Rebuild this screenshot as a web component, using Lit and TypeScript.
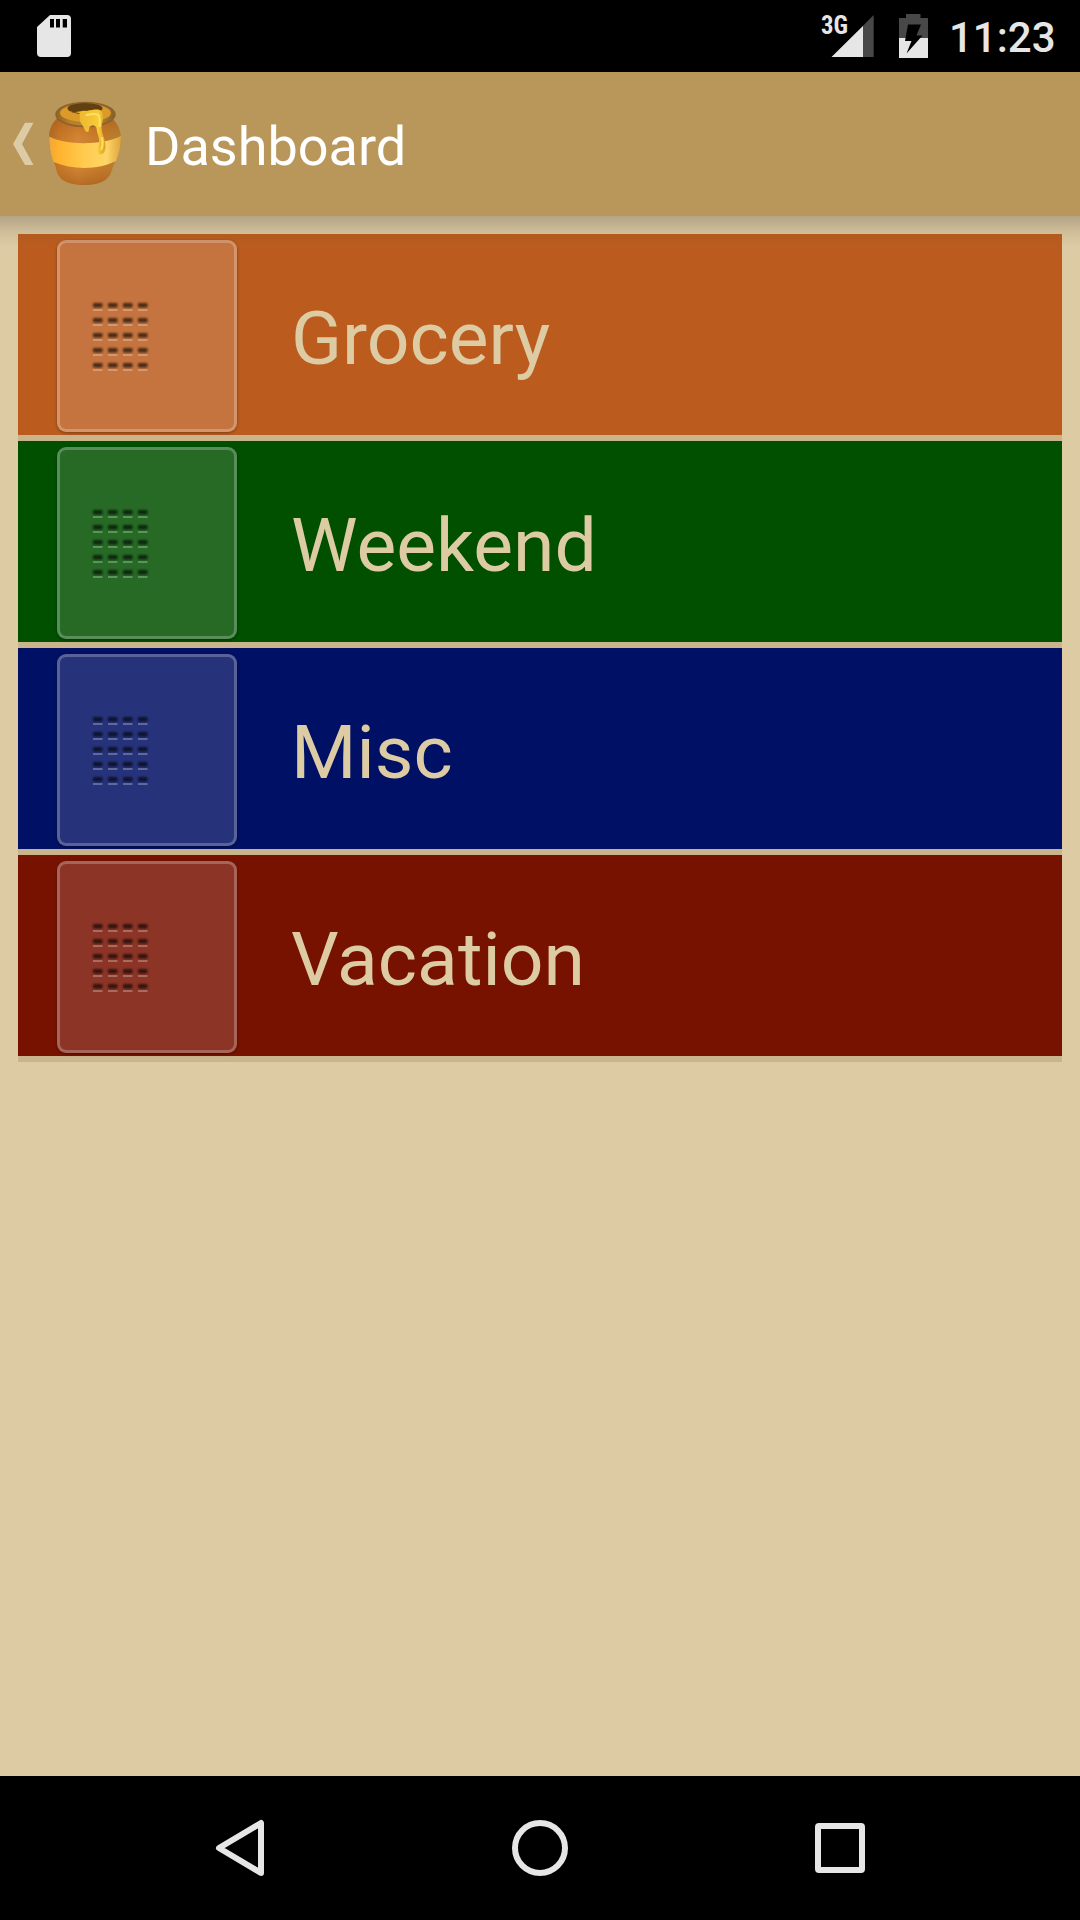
import { LitElement, html, css, svg } from "lit";
import { customElement, property } from "lit/decorators.js";

@customElement("status-bar")
class StatusBar extends LitElement {
  static styles = css`
    :host { display: flex; height: 72px; background: #000; align-items: flex-start; justify-content: space-between; color: #e6e6e6; }
    svg { display: block; }
    .right { display: flex; }
    .clock { font: 500 42px/72px Roboto, sans-serif; width: 131px; padding-top: 2px; height: 70px; white-space: nowrap; }
    .net { font: 700 25px "Roboto Condensed", Roboto, sans-serif; }
  `;
  render() {
    return html`
      <svg width="100" height="72" viewBox="0 0 100 72">
        <path fill="#e6e6e6" fill-rule="evenodd" d="M50 15H67Q71 15 71 19V53Q71 57 67 57H41Q37 57 37 53V27ZM50 19V27.5H54V19ZM56 19V27.5H60V19ZM62.700 19V27.500H67V19Z"/>
      </svg>
      <div class="right">
        <svg width="134" height="72" viewBox="815 0 134 72">
          <path fill="#484848" d="M873.700 15V57H832Z"/>
          <path fill="#e6e6e6" d="M863 26V57H831.500Z"/>
          <text class="net" x="821" y="33.500" textLength="27" lengthAdjust="spacingAndGlyphs" fill="#e6e6e6">3G</text>
          <path fill="#484848" d="M906 14H920.500V18H928V38H899V18H906Z"/>
          <path fill="#e6e6e6" d="M899 38H928V58H899Z"/>
          <path fill="#000" d="M908 24.500H921L916.500 35.500H922.500L906.500 53.500L911.500 41H905Z"/>
        </svg>
        <div class="clock">11:23</div>
      </div>`;
  }
}

@customElement("honey-pot")
class HoneyPot extends LitElement {
  static styles = css`:host { display: block; } svg { display: block; }`;
  render() {
    return html`<svg width="80" height="90" viewBox="43.500 98 80 90">
      <defs>
        <linearGradient id="body" x1="0" x2="1">
          <stop offset="0" stop-color="#a96d29"/><stop offset=".13" stop-color="#c67928"/><stop offset=".4" stop-color="#d58a36"/><stop offset=".75" stop-color="#c67d2a"/><stop offset="1" stop-color="#b38334"/>
        </linearGradient>
        <linearGradient id="shade" x1="0" x2="0" y1="0" y2="1">
          <stop offset="0" stop-color="#a34d13" stop-opacity=".5"/><stop offset=".3" stop-color="#b75d18" stop-opacity=".1"/><stop offset=".75" stop-color="#a65519" stop-opacity=".12"/><stop offset="1" stop-color="#955018" stop-opacity=".5"/>
        </linearGradient>
        <linearGradient id="band" x1="0" x2="1">
          <stop offset="0" stop-color="#efa637"/><stop offset=".13" stop-color="#ffb22e"/><stop offset=".5" stop-color="#ffcb50"/><stop offset=".8" stop-color="#ffd566"/><stop offset="1" stop-color="#dda53e"/>
        </linearGradient>
        <linearGradient id="rim" x1="0" x2="1">
          <stop offset="0" stop-color="#8f6428"/><stop offset=".25" stop-color="#b98029"/><stop offset=".7" stop-color="#b9852c"/><stop offset="1" stop-color="#80602c"/>
        </linearGradient>
        <linearGradient id="honey" x1="0" x2="1">
          <stop offset="0" stop-color="#efb42a"/><stop offset=".45" stop-color="#f1bd32"/><stop offset=".8" stop-color="#f8cb38"/><stop offset="1" stop-color="#daa027"/>
        </linearGradient>
      </defs>
      <path fill="url(#body)" d="M57 118C50 124 48 133 48.500 141C49 151 53 160 55.500 168C57 178 64 185 84 185C103 185 110 178 112 168C115 160 119.500 151 120.500 140C120.500 131 118 124 111 118Z"/>
      <path fill="url(#shade)" d="M57 118C50 124 48 133 48.500 141C49 151 53 160 55.500 168C57 178 64 185 84 185C103 185 110 178 112 168C115 160 119.500 151 120.500 140C120.500 131 118 124 111 118Z"/>
      <path fill="url(#band)" d="M48.500 136.500C66 145.500 101 145.500 120.500 136C120.500 147 118 155 115.500 161C98 170 72 170 53 162C50 154 48.500 146 48.500 136.500Z"/>
      <ellipse cx="85" cy="114.500" rx="29.500" ry="12" fill="url(#rim)" stroke="#8c622c" stroke-width="1.500"/>
      <ellipse cx="85" cy="113" rx="25.500" ry="9" fill="#dc9a2b"/>
      <ellipse cx="84.500" cy="108.500" rx="17.500" ry="5.500" fill="#63400f"/>
      <path fill="url(#honey)" d="M68 111C77 114 79 110 86 111C94 109 99 109 101 111C104 116 102 121 101 127C101 134 105 139 105 146C105 151 103 155 99.500 154.500C96 153 97 148 98.500 143C99.500 137 96 133 96 128C94 124 91 125 89 127C88 130 89 132 86.500 132C83.500 131 84 127 81 124C78 120 80 116 79 113Z"/>
      <path fill="none" stroke="#ffe065" stroke-width="2" stroke-linecap="round" d="M86 115Q94 113 98 115Q100 119 99 126M101.500 138Q103 144 101 149"/>
    </svg>`;
  }
}

@customElement("app-bar")
class AppBar extends LitElement {
  static styles = css`
    :host { display: flex; height: 144px; background: #b9965a; box-sizing: border-box; position: relative; z-index: 1; }
    .up { display: block; width: 44px; height: 144px; }
    honey-pot { padding-top: 26px; }
    .title { font: 400 54px/144px Roboto, sans-serif; color: #fff; padding-left: 21px; padding-top: 3px; }
    .shadow { position: absolute; left: 0; right: 0; top: 144px; height: 30px; background: linear-gradient(rgba(60,55,50,.26), rgba(90,75,50,.1) 55%, rgba(90,75,50,0)); pointer-events: none; }
  `;
  render() {
    return html`
      <svg class="up" viewBox="0 72 44 144"><path fill="#dccba5" d="M25 122.700H33.500L22 144L33.500 165H25L13 144Z"/></svg>
      <honey-pot></honey-pot>
      <div class="title">Dashboard</div>
      <div class="shadow"></div>`;
  }
}

@customElement("list-row")
class ListRow extends LitElement {
  @property() label = "";
  static styles = css`
    :host { display: flex; align-items: flex-start; height: 201px; border-bottom: 6px solid #c9b48c; }
    .key { box-sizing: border-box; width: 180px; height: 192px; margin: 6px 0 0 39px; border: 3px solid rgba(255,255,255,.24); border-radius: 9px; background: rgba(255,255,255,.15); box-shadow: 0 1px 3px rgba(0,0,0,.35); }
    svg { display: block; }
    .dash { fill: #000; fill-opacity: .64; filter: blur(.8px); }
    .glint { fill: #fff; fill-opacity: .27; filter: blur(.5px); }
    .label { font: 400 75px/201px Roboto, sans-serif; color: #ddcba4; padding: 4px 0 0 54px; white-space: nowrap; }
  `;
  render() {
    const dashes = [];
    const glints = [];
    for (let r = 0; r < 5; r++)
      for (let c = 0; c < 4; c++) {
        dashes.push(svg`<rect x=${33 + c * 15} y=${60 + r * 15} width="9.500" height="4.500" rx="1"/>`);
        glints.push(svg`<rect x=${33 + c * 15} y=${66 + r * 15} width="9.500" height="2"/>`);
      }
    return html`<div class="key"><svg width="174" height="186"><g class="dash">${dashes}</g><g class="glint">${glints}</g></svg></div><div class="label">${this.label}</div>`;
  }
}

@customElement("nav-bar")
class NavBar extends LitElement {
  static styles = css`
    :host { display: flex; justify-content: center; gap: 240px; padding-top: 40px; height: 104px; background: #000; }
    svg { display: block; fill: none; stroke: #e6e6e6; stroke-width: 6; stroke-linejoin: round; }
  `;
  render() {
    return html`
      <svg width="60" height="64"><path d="M51 7V57L9 32Z"/></svg>
      <svg width="60" height="64"><circle cx="30" cy="32" r="25"/></svg>
      <svg width="60" height="64"><rect x="8" y="10" width="44" height="44" rx="1"/></svg>`;
  }
}

@customElement("app-root")
class AppRoot extends LitElement {
  static styles = css`
    :host { display: flex; flex-direction: column; width: 1080px; height: 1920px; background: #ddcba4; overflow: hidden; }
    .list { flex: 1; padding: 18px; display: flex; flex-direction: column; }
    .grocery { background: #bb5c1e; }
    .weekend { background: #005000; }
    .misc { background: #001064; }
    .vacation { background: #781200; }
  `;
  render() {
    return html`
      <status-bar></status-bar>
      <app-bar></app-bar>
      <div class="list">
        <list-row class="grocery" label="Grocery"></list-row>
        <list-row class="weekend" label="Weekend"></list-row>
        <list-row class="misc" label="Misc"></list-row>
        <list-row class="vacation" label="Vacation"></list-row>
      </div>
      <nav-bar></nav-bar>`;
  }
}
